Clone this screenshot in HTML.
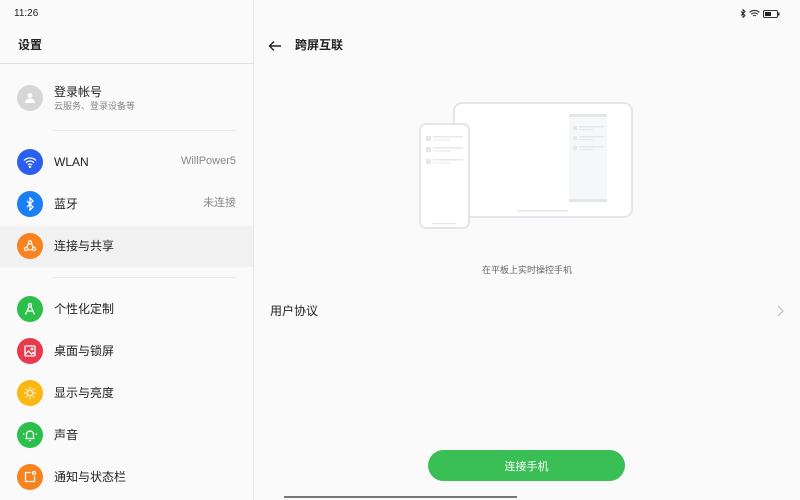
<!DOCTYPE html>
<html><head><meta charset="utf-8"><style>
*{margin:0;padding:0;box-sizing:border-box}
body{width:800px;height:500px;overflow:hidden;background:#fafafa;font-family:"Liberation Sans","Noto Sans CJK SC",sans-serif;position:relative;color:#222}
.abs{position:absolute}
.ic{position:absolute;left:17px;width:26px;height:26px;border-radius:50%;display:flex;align-items:center;justify-content:center}
.lbl{position:absolute;left:54px;font-size:12px;color:#222;line-height:14px}
.val{position:absolute;right:564px;font-size:11px;color:#888;line-height:13px}
</style></head><body>
<div class="abs" style="left:14px;top:8px;font-size:10px">11:26</div>
<div class="abs" style="left:18px;top:38px;font-size:12px;font-weight:bold;line-height:15px">设置</div>
<div class="abs" style="left:0;top:63px;width:253px;height:1px;background:#e2e2e2"></div>
<div class="abs" style="left:253px;top:0;width:1px;height:500px;background:#e6e6e6"></div>

<div class="ic" style="top:85px;background:#d6d6d6"><svg width="14" height="14" viewBox="0 0 14 14"><circle cx="7" cy="4.5" r="2.5" fill="#fff"/><path d="M2 12c0-3 2.5-4.5 5-4.5s5 1.5 5 4.5z" fill="#fff"/></svg></div>
<div class="lbl" style="top:85px">登录帐号</div>
<div class="lbl" style="top:101px;font-size:9px;color:#888;line-height:11px">云服务、登录设备等</div>
<div class="abs" style="left:53px;top:130px;width:183px;height:1px;background:#ececec"></div>

<div class="ic" style="top:149px;background:#2a5ff0"><svg width="14" height="12" viewBox="0 0 14 12" fill="none" stroke="#fff" stroke-width="1.3"><path d="M1 4.5a8.5 8.5 0 0 1 12 0M3 6.8a5.3 5.3 0 0 1 8 0M5 9a2.5 2.5 0 0 1 4 0"/><circle cx="7" cy="10.8" r=".6" fill="#fff"/></svg></div>
<div class="lbl" style="top:155px">WLAN</div><div class="val" style="top:155px">WillPower5</div>

<div class="ic" style="top:191px;background:#1a7ff5"><svg width="10" height="14" viewBox="0 0 10 14" fill="none" stroke="#fff" stroke-width="1.3"><path d="M2 4l6 6-3 3V1l3 3-6 6"/></svg></div>
<div class="lbl" style="top:197px">蓝牙</div><div class="val" style="top:197px">未连接</div>

<div class="abs" style="left:0;top:226px;width:253px;height:41px;background:#f1f1f1"></div>
<div class="ic" style="top:233px;background:#f7821e"><svg width="14" height="14" viewBox="0 0 14 14" fill="none" stroke="#fff" stroke-width="1.2"><circle cx="7" cy="3.5" r="1.6"/><circle cx="3" cy="10" r="1.6"/><circle cx="11" cy="10" r="1.6"/><path d="M5.5 4.5L3.8 8.5M8.5 4.5l1.7 4M4.6 10.6h4.8"/></svg></div>
<div class="lbl" style="top:239px">连接与共享</div>
<div class="abs" style="left:53px;top:277px;width:183px;height:1px;background:#ececec"></div>

<div class="ic" style="top:296px;background:#2dbf4b"><svg width="12" height="14" viewBox="0 0 12 14" fill="none" stroke="#fff" stroke-width="1.3"><circle cx="6" cy="3" r="1.5"/><path d="M5.2 4.4L1.5 12.5M6.8 4.4l3.7 8.1M3 9h6"/></svg></div>
<div class="lbl" style="top:302px">个性化定制</div>
<div class="ic" style="top:338px;background:#e83a4c"><svg width="14" height="14" viewBox="0 0 14 14" fill="none" stroke="#fff" stroke-width="1.3"><rect x="2" y="2" width="10" height="10" rx="1"/><path d="M2.5 10l3-3 3 3 1.5-1.5 2 2"/><circle cx="9" cy="5" r=".8"/></svg></div>
<div class="lbl" style="top:344px">桌面与锁屏</div>
<div class="ic" style="top:380px;background:#fbb812"><svg width="14" height="14" viewBox="0 0 14 14" fill="none" stroke="#fff" stroke-width="1.2"><circle cx="7" cy="7" r="2.8"/><path d="M7 1v1.5M7 11.5V13M1 7h1.5M11.5 7H13M2.8 2.8l1 1M10.2 10.2l1 1M2.8 11.2l1-1M10.2 3.8l1-1"/></svg></div>
<div class="lbl" style="top:386px">显示与亮度</div>
<div class="ic" style="top:422px;background:#2dbf4b"><svg width="16" height="14" viewBox="0 0 16 14" fill="none" stroke="#fff" stroke-width="1.2"><path d="M4.5 10.5V6.5a3.5 3.5 0 0 1 7 0v4zM3.5 10.5h9M7 12.5h2M1 6h1.5M13.5 6H15"/></svg></div>
<div class="lbl" style="top:428px">声音</div>
<div class="ic" style="top:464px;background:#f7821e"><svg width="14" height="14" viewBox="0 0 14 14" fill="none" stroke="#fff" stroke-width="1.3"><path d="M8 2.5H2.5v9h9V6"/><circle cx="11" cy="3" r="1.5"/></svg></div>
<div class="lbl" style="top:470px">通知与状态栏</div>

<!-- right -->
<div class="abs" style="left:740px;top:9px;font-size:8px;display:flex;gap:3px;align-items:center">
<svg width="6" height="9" viewBox="0 0 6 9" fill="none" stroke="#333" stroke-width="1"><path d="M1 2.5l4 4-2 2V.5l2 2-4 4"/></svg>
<svg width="11" height="9" viewBox="0 0 10 8" fill="none" stroke="#333" stroke-width="1"><path d="M.5 3a6.5 6.5 0 0 1 9 0M2 4.7a4.3 4.3 0 0 1 6 0M3.6 6.3a2 2 0 0 1 2.8 0"/></svg>
<svg width="17" height="8" viewBox="0 0 17 8"><rect x=".5" y=".5" width="14" height="7" rx="1.5" fill="none" stroke="#333"/><rect x="2" y="2" width="6" height="4" fill="#222"/><rect x="15" y="2.5" width="1.5" height="3" fill="#333"/></svg>
</div>
<svg class="abs" style="left:268px;top:40px" width="14" height="12" viewBox="0 0 14 12" fill="none" stroke="#222" stroke-width="1.4"><path d="M13 6H1.5M6 1.5L1.5 6 6 10.5"/></svg>
<div class="abs" style="left:295px;top:38px;font-size:12px;font-weight:bold;line-height:15px">跨屏互联</div>

<svg class="abs" style="left:418px;top:100px" width="218" height="130" viewBox="0 0 218 130">
<rect x="36" y="3" width="178" height="114" rx="8" fill="#fff" stroke="#e3e5ea" stroke-width="2"/>
<rect x="151" y="14" width="38" height="88" fill="#f6f7f9"/>
<rect x="151" y="14" width="38" height="3" fill="#e3e5ea"/><rect x="151" y="99" width="38" height="3" fill="#e3e5ea"/>
<g fill="#e6e7eb"><rect x="155" y="26" width="4" height="4"/><rect x="161" y="26" width="25" height="1.5"/><rect x="161" y="29" width="14" height="1"/>
<rect x="155" y="36" width="4" height="4"/><rect x="161" y="36" width="25" height="1.5"/><rect x="161" y="39" width="14" height="1"/>
<rect x="155" y="46" width="4" height="4"/><rect x="161" y="46" width="25" height="1.5"/><rect x="161" y="49" width="14" height="1"/></g>
<rect x="100" y="110" width="50" height="1.5" fill="#e3e5ea"/>
<rect x="2" y="24" width="49" height="104" rx="6" fill="#fff" stroke="#e3e5ea" stroke-width="2"/>
<g fill="#e6e7eb"><rect x="8" y="36" width="5" height="5"/><rect x="15" y="36" width="30" height="1.5"/><rect x="15" y="39.5" width="18" height="1"/>
<rect x="8" y="47" width="5" height="5"/><rect x="15" y="47" width="30" height="1.5"/><rect x="15" y="50.5" width="18" height="1"/>
<rect x="8" y="59" width="5" height="5"/><rect x="15" y="59" width="30" height="1.5"/><rect x="15" y="62.5" width="18" height="1"/></g>
<rect x="14" y="123" width="24" height="1.2" fill="#e3e5ea"/>
</svg>
<div class="abs" style="left:427px;top:264px;width:200px;text-align:center;font-size:9px;color:#666;line-height:12px">在平板上实时操控手机</div>
<div class="abs" style="left:270px;top:304px;font-size:12px;line-height:14px">用户协议</div>
<svg class="abs" style="left:777px;top:305px" width="7" height="12" viewBox="0 0 7 12" fill="none" stroke="#bbb" stroke-width="1.2"><path d="M1 1l5 5-5 5"/></svg>
<div class="abs" style="left:428px;top:450px;width:197px;height:31px;border-radius:16px;background:#3abf56;color:#fff;font-size:11px;display:flex;align-items:center;justify-content:center">连接手机</div>
<div class="abs" style="left:284px;top:496px;width:233px;height:2px;background:#777"></div>
</body></html>
